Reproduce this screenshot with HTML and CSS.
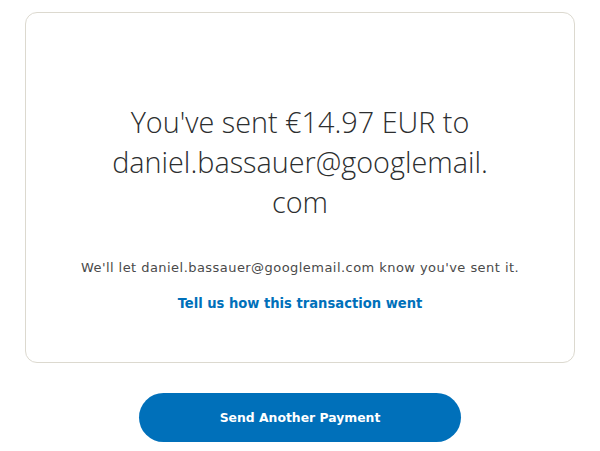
FILE: index.html
```html
<!DOCTYPE html>
<html lang="en">
<head>
<meta charset="utf-8">
<title>Payment sent</title>
<link rel="stylesheet" href="styles.css">
</head>
<body>
<main class="page">
  <section class="card">
    <h1 class="headline">You've sent €14.97 EUR to daniel.bassauer@googlemail.<wbr>com</h1>
    <p class="note">We'll let daniel.bassauer@googlemail.com know you've sent it.</p>
    <a class="feedback" href="#">Tell us how this transaction went</a>
  </section>
  <div class="actions">
    <a class="btn-primary" href="#">Send Another Payment</a>
  </div>
</main>
</body>
</html>
```
FILE: styles.css
```css
html, body {
  margin: 0;
  padding: 0;
  background: #ffffff;
}
body {
  font-family: "DejaVu Sans", Verdana, sans-serif;
  color: #2c2e2f;
}
.page {
  padding: 12px 25px 0;
}
.card {
  box-sizing: border-box;
  height: 351px;
  border: 1px solid #dcd9cf;
  border-radius: 12px;
  padding: 89px 40px 0;
  display: flex;
  flex-direction: column;
  align-items: center;
  text-align: center;
}
.headline {
  margin: 0;
  max-width: 420px;
  font-family: "Open Sans", sans-serif;
  font-weight: 300;
  font-size: 28.8px;
  line-height: 40px;
  color: #2c2e2f;
}
.note {
  margin: 37px 0 0;
  font-size: 13px;
  line-height: 18px;
  letter-spacing: 0.45px;
  color: #4a4a4a;
}
.feedback {
  margin-top: 17px;
  font-family: "DejaVu Sans Condensed", "DejaVu Sans", sans-serif;
  font-stretch: condensed;
  font-size: 14.6px;
  line-height: 18px;
  font-weight: bold;
  color: #0070ba;
  text-decoration: none;
}
.actions {
  display: flex;
  justify-content: center;
  margin-top: 30px;
}
.btn-primary {
  box-sizing: border-box;
  width: 322px;
  height: 49px;
  border-radius: 25px;
  background: #0070ba;
  color: #ffffff;
  font-size: 12.4px;
  font-weight: bold;
  text-decoration: none;
  display: flex;
  align-items: center;
  justify-content: center;
}
```
